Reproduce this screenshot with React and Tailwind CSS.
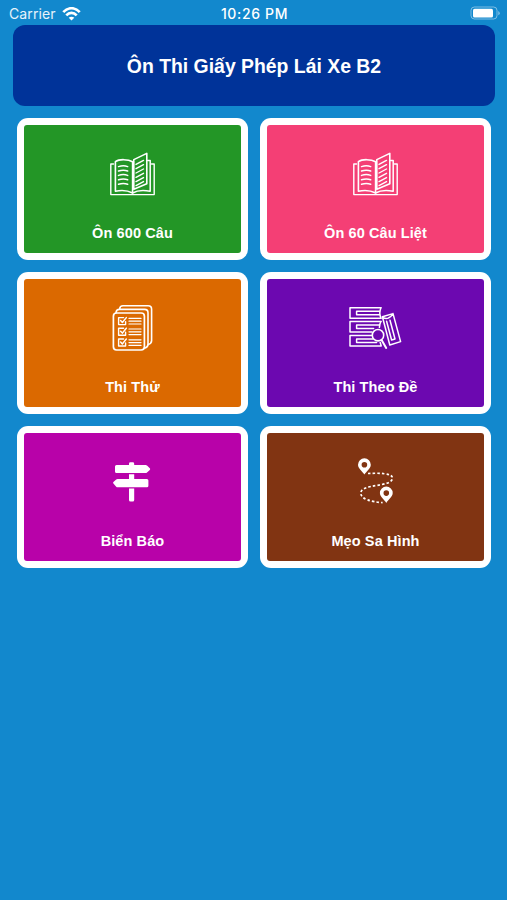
import React from "react";

function BookIcon() {
  return (
    <>
      <path d="M8.5 17H5.8v30.6h43.4V17h-2.7" strokeWidth="1.4" />
      <path d="M10.4 44.2V14.6C14 12 23 12 27.6 14.8V46C22 43 16 43 10.4 44.2Z" strokeWidth="1.6" />
      <path d="M27.6 46c5-3 11-3 17.6-1.8V13.4h-2.6" strokeWidth="1.5" />
      <path d="M28.8 12.6 41.8 6.4v30.3L28.8 42.2Z" strokeWidth="1.6" />
      <path d="M13.5 19.6q5-1.6 9.2 0M13.5 24q5-1.6 9.2 0M13.5 28.4q5-1.6 9.2 0M13.5 32.8q5-1.6 9.2 0M13.5 37.2q5-1.6 9.2 0" strokeWidth="1.5" />
      <path d="m31 17.4 7.5-4M31 21.7l7.5-4M31 26l7.5-4M31 30.3l7.5-4M31 34.6l7.5-4M31 38.6l7.5-4" strokeWidth="1.4" />
    </>
  );
}

function TestIcon() {
  return (
    <>
      <rect x="8.4" y="12" width="31" height="37" rx="3.2" strokeWidth="1.7" />
      <path d="M11 11.6c.2-2 1.4-3.2 3.4-3.2h25.2c2 0 3.4 1.4 3.4 3.4v31.4c0 2-1.4 3.4-3.4 4" strokeWidth="1.6" />
      <path d="M14.6 8c.2-2 1.4-3.2 3.4-3.2h25.2c2 0 3.4 1.4 3.4 3.4v31.4c0 1.8-1.4 3.4-3.4 4" strokeWidth="1.6" />
      {[16.6, 27.2, 38].map((y) => (
        <g key={y} transform={`translate(13.6 ${y})`}>
          <path d="M5 0H0v7h7V4" strokeWidth="1.4" />
          <path d="m2 3 1.8 1.9L7.7 0" strokeWidth="1.5" />
          <path d="M10.4.8h12M10.4 3.6h12M10.4 6.4h12" strokeWidth="1.2" />
        </g>
      ))}
    </>
  );
}

function LibraryIcon() {
  return (
    <>
      <path d="M33.2 6.7H2v10.5h31.2M33 6.7q-2.4 5.2 0 10.5M31.6 10.2H8.6v3.6h23" strokeWidth="1.5" />
      <path d="M33.2 20.4H2v10.5h22M33 20.4q-1.6 2.8-1.6 6M31.4 24H8.6v3.4h17" strokeWidth="1.5" />
      <path d="M24 34.4H2v10.5h31.2l-1-3.4M25 38H8.6v3.4h20" strokeWidth="1.5" />
      <circle cx="30" cy="34.2" r="5.7" strokeWidth="1.6" />
      <path d="m33.6 39 4.6 8" strokeWidth="2" />
      <path d="m34.4 15.8 10.6-3.2 7.6 28-10.8 3.4ZM34.4 15.8q3.6 2.8 6 1.2 2.6-1 4.6-4.4M38.6 20.2l5 18.8 3.4-1-5-18.8" strokeWidth="1.5" />
    </>
  );
}

function SignpostIcon() {
  return (
    <g fill="currentColor" stroke="none" transform="translate(0 -6.7)">
      <path d="M24 16.7V15.4q0-1.4 1.4-1.4h2.4q1.4 0 1.4 1.4v1.3h11.4q.8 0 1.4.6l2.8 2.7q.9.8 0 1.6L42 24.2q-.6.6-1.4.6H11.5q-1.5 0-1.5-1.5v-5.1q0-1.5 1.5-1.5Z" />
      <path d="M24 26h5.2v4.7h12.7q1.5 0 1.5 1.5v5.3q0 1.5-1.5 1.5H12.6q-.8 0-1.4-.6l-2.8-3.2q-.7-.8 0-1.6l2.8-2.3q.6-.6 1.4-.6H24Z" />
      <path d="M24 40.3h5.2v11.4q0 1.5-1.5 1.5h-2.2q-1.5 0-1.5-1.5Z" />
    </g>
  );
}

function RouteIcon() {
  return (
    <g transform="translate(0 -6.7)">
      <path d="M20 25.2c10-.6 24-.4 24.4 4.2.4 5-8 6.5-16 7.8-9 1.4-15.6 3.2-15.6 7.6 0 6 10.2 8.8 21.8 9.5" strokeWidth="1.7" strokeDasharray="2.5 2.1" strokeLinecap="butt" />
      <g fill="currentColor" fillRule="evenodd" stroke="none">
        <path id="pin" d="M16.4 26.3c-1.5-2.8-6.4-6-6.4-9.9a6.4 6.4 0 0 1 12.8 0c0 3.9-4.9 7.1-6.4 9.9Zm0-12.6a2.8 2.8 0 1 0 0 5.6 2.8 2.8 0 0 0 0-5.6Z" />
        <use href="#pin" x="21.9" y="28.3" />
      </g>
    </g>
  );
}

const MENU = [
  { label: "Ôn 600 Câu", bg: "bg-[#239626]", icon: BookIcon },
  { label: "Ôn 60 Câu Liệt", bg: "bg-[#f43f75]", icon: BookIcon },
  { label: "Thi Thử", bg: "bg-[#db6900]", icon: TestIcon },
  { label: "Thi Theo Đề", bg: "bg-[#6c08b0]", icon: LibraryIcon },
  { label: "Biển Báo", bg: "bg-[#b802a9]", icon: SignpostIcon },
  { label: "Mẹo Sa Hình", bg: "bg-[#813412]", icon: RouteIcon },
];

function StatusBar() {
  return (
    <div className="grid h-[25px] grid-cols-3 items-center pl-[9px] pr-[7px] pt-[3px] font-['Inter',sans-serif] text-[14px] leading-none">
      <div className="flex items-center gap-1.5">
        <span className="tracking-[0.1px] text-white/90">Carrier</span>
        <svg className="mb-px h-[14px] w-[19px]" viewBox="0 0 19 14" fill="none" stroke="currentColor" strokeWidth="2.7">
          <path d="M1.3 5.2C6-.1 13-.1 17.7 5.2M4.3 8.3c3-3.2 7.4-3.2 10.4 0" />
          <path d="M9.5 13.6 6.7 10.8c1.6-1.5 4-1.5 5.6 0Z" fill="currentColor" stroke="none" />
        </svg>
      </div>
      <span className="text-center font-medium tracking-[0.65px]">10:26 PM</span>
      <svg className="mb-0.5 h-[14px] w-[30px] justify-self-end" viewBox="0 0 30 14" fill="none">
        <rect x="1" y="1" width="26" height="12" rx="3.4" stroke="#fff" strokeOpacity=".45" />
        <rect x="3" y="2.8" width="20" height="8.8" rx="1.6" fill="#fff" />
        <path d="M28.3 5v4.3q1.4-.7 1.4-2.1T28.3 5Z" fill="#fff" fillOpacity=".5" />
      </svg>
    </div>
  );
}

function MenuCard({ item }) {
  const Icon = item.icon;
  return (
    <button className="h-[142px] rounded-[11px] bg-white p-[7px]">
      <div className={`flex h-full flex-col items-center rounded-[3px] pt-[22px] ${item.bg}`}>
        <svg className="h-[55px] w-[55px] shrink-0 overflow-visible" viewBox="0 0 55 55" fill="none" stroke="currentColor" strokeLinejoin="round" strokeLinecap="round">
          <Icon />
        </svg>
        <span className="mt-[21px] text-[14.5px] leading-5 font-bold tracking-[0.1px]">{item.label}</span>
      </div>
    </button>
  );
}

export default function App() {
  return (
    <div className="min-h-screen bg-[#1288cd] font-['Liberation_Sans',Arial,sans-serif] text-white">
      <StatusBar />
      <h1 className="mr-3 ml-[13px] flex h-[81px] items-center justify-center rounded-xl bg-[#003399] pt-0.5 text-[19.4px] font-bold">
        Ôn Thi Giấy Phép Lái Xe B2
      </h1>
      <div className="grid grid-cols-2 gap-3 pt-3 pr-4 pl-[17px]">
        {MENU.map((item) => (
          <MenuCard key={item.label} item={item} />
        ))}
      </div>
    </div>
  );
}
